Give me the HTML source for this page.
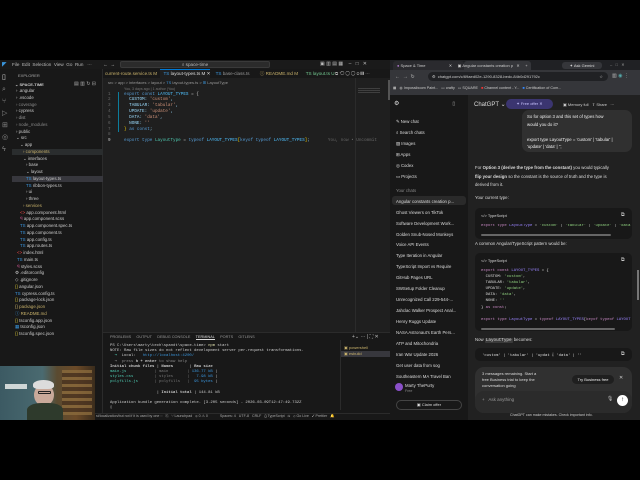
<!DOCTYPE html>
<html><head><meta charset="utf-8"><style>
*{margin:0;padding:0;box-sizing:border-box}
body{width:640px;height:480px;background:#000;position:relative;overflow:hidden;font-family:"Liberation Sans",sans-serif;font-size:4.6px;color:#ccc}
.a{position:absolute;white-space:nowrap}
.m{font-family:"Liberation Mono",monospace}
</style></head><body>
<!-- VS Code -->
<div class="a" style="left:0;top:60px;width:390px;height:360px;background:#1f1f1f"></div>
<div class="a" style="left:0;top:60px;width:390px;height:9px;background:#1a1a1a"></div>
<div class="a" style="left:2px;top:61px;color:#3a96dd;font-size:6px">◤</div>
<div class="a" style="left:12px;top:62px;color:#bbb">File&nbsp;&nbsp;Edit&nbsp;&nbsp;Selection&nbsp;&nbsp;View&nbsp;&nbsp;Go&nbsp;&nbsp;Run&nbsp;&nbsp;&nbsp;···&nbsp;&nbsp;&nbsp;&nbsp;&nbsp;&nbsp;&nbsp;&nbsp;&nbsp;←&nbsp;&nbsp;→</div>
<div class="a" style="left:120px;top:61px;width:150px;height:7px;background:#2b2b2b;border:1px solid #3a3a3a;border-radius:2px;color:#bbb;text-align:center;line-height:5px">⌕ space-time</div>
<div class="a" style="left:320px;top:61px;color:#bbb;font-size:5px">▣ ▥ ▤ ▦&nbsp;&nbsp;&nbsp;&nbsp;–&nbsp;&nbsp;&nbsp;□&nbsp;&nbsp;&nbsp;✕</div>
<!-- activity bar -->
<div class="a" style="left:0;top:69px;width:12px;height:344px;background:#181818"></div>
<div class="a" style="left:2px;top:72px;color:#ddd;font-size:7px;line-height:12px">▯<br><span style="color:#888">⌕<br>⑂<br>▷<br>⊞<br>◎<br>ϟ</span></div>
<!-- sidebar -->
<div class="a" style="left:12px;top:69px;width:91px;height:344px;background:#181818;border-right:1px solid #2b2b2b"></div>
<div class="a" style="left:18px;top:73px;color:#aaa;font-size:4px">EXPLORER</div>
<div class="a" style="left:15px;top:82px;color:#ccc;font-size:4px;font-weight:bold">⌄ SPACE-TIME</div>
<div class="a" style="left:74px;top:81px;color:#aaa;font-size:5px">▤ ▥ ↻ ⊟</div>
<div class="a" style="left:12px;top:149px;width:91px;height:6px;background:#2a2d2e"></div>
<div class="a" style="left:12px;top:176px;width:91px;height:6px;background:#37373d"></div>
<div class="a" style="left:0;top:88px;line-height:6.75px;color:#ccc;font-size:4.4px">
<div style="padding-left:16px">› .angular</div><div style="padding-left:16px">› .vscode</div><div style="padding-left:16px;color:#888">› coverage</div><div style="padding-left:16px">› cypress</div><div style="padding-left:16px;color:#999">› dist</div><div style="padding-left:16px;color:#888">› node_modules</div><div style="padding-left:16px">› public</div><div style="padding-left:16px">⌄ src</div><div style="padding-left:20px">⌄ app</div><div style="padding-left:23px;color:#c9b26b">› components</div><div style="padding-left:23px">⌄ interfaces</div><div style="padding-left:26px">› base</div><div style="padding-left:26px">⌄ layout</div><div style="padding-left:26px"><span style="color:#3a96dd">TS</span> layout-types.ts</div><div style="padding-left:26px"><span style="color:#3a96dd">TS</span> ribbon-types.ts</div><div style="padding-left:26px">› ui</div><div style="padding-left:26px">› three</div><div style="padding-left:23px;color:#c9b26b">› services</div><div style="padding-left:20px"><span style="color:#e44">&lt;&gt;</span> app.component.html</div><div style="padding-left:20px"><span style="color:#c6538c">ꟼ</span> app.component.scss</div><div style="padding-left:20px"><span style="color:#3a96dd">TS</span> app.component.spec.ts</div><div style="padding-left:20px"><span style="color:#3a96dd">TS</span> app.component.ts</div><div style="padding-left:20px"><span style="color:#3a96dd">TS</span> app.config.ts</div><div style="padding-left:20px"><span style="color:#3a96dd">TS</span> app.routes.ts</div><div style="padding-left:17px"><span style="color:#e44">&lt;&gt;</span> index.html</div><div style="padding-left:17px"><span style="color:#3a96dd">TS</span> main.ts</div><div style="padding-left:17px"><span style="color:#c6538c">ꟼ</span> styles.scss</div><div style="padding-left:15px">⚙ .editorconfig</div><div style="padding-left:15px">◇ .gitignore</div><div style="padding-left:15px"><span style="color:#cb3">{}</span> angular.json</div><div style="padding-left:15px"><span style="color:#3a96dd">TS</span> cypress.config.ts</div><div style="padding-left:15px"><span style="color:#cb3">{}</span> package-lock.json</div><div style="padding-left:15px;color:#c9b26b"><span>{}</span> package.json</div><div style="padding-left:15px;color:#c9b26b"><span style="color:#3a96dd">ⓘ</span> README.md</div><div style="padding-left:15px"><span style="color:#cb3">{}</span> tsconfig.app.json</div><div style="padding-left:15px"><span style="color:#3a96dd">▦</span> tsconfig.json</div><div style="padding-left:15px"><span style="color:#cb3">{}</span> tsconfig.spec.json</div>
</div>
<!-- tabs -->
<div class="a" style="left:103px;top:69px;width:287px;height:9px;background:#181818"></div>
<div class="a" style="left:160px;top:69px;width:50px;height:9px;background:#1f1f1f;border-top:1px solid #0078d4"></div>
<div class="a" style="left:105px;top:71px;color:#c9b26b">current-route.service.ts M&nbsp;&nbsp;&nbsp;&nbsp;&nbsp;<span style="color:#ddd"><span style="color:#3a96dd">TS</span> layout-types.ts M ✕</span>&nbsp;&nbsp;&nbsp;&nbsp;<span style="color:#999"><span style="color:#3a96dd">TS</span> base-class.ts</span>&nbsp;&nbsp;&nbsp;&nbsp;&nbsp;&nbsp;&nbsp;&nbsp;<span>ⓘ README.md M</span>&nbsp;&nbsp;&nbsp;&nbsp;&nbsp;&nbsp;<span style="color:#73c991">TS layout.ts U</span></div>
<div class="a" style="left:335px;top:71px;color:#aaa;font-size:4.5px">⧉ ⟲ ◯ ◯ ⊛ ▥ ···</div>
<div class="a" style="left:108px;top:80px;color:#999;font-size:4px">src &gt; app &gt; interfaces &gt; layout &gt; <span style="color:#3a96dd">TS</span> layout-types.ts &gt; <span style="color:#3a96dd">⊞</span> LayoutType</div>
<div class="a" style="left:124px;top:87px;color:#777;font-size:3.6px">You, 3 days ago | 1 author (You)</div>
<div class="a m" style="left:108px;top:91.5px;line-height:5.85px;font-size:4.3px;color:#666">1<br>2<br>3<br>4<br>5<br>6<br>7<br>8<br><span style="color:#ccc">9</span></div>
<div class="a" style="left:118px;top:92px;width:1px;height:40px;background:#0c7d9d"></div>
<div class="a m" style="left:124px;top:91.5px;line-height:5.85px;font-size:4.3px;color:#9cdcfe">
<div><span style="color:#569cd6">export const</span> <span style="color:#4fc1ff">LAYOUT_TYPES</span> <span style="color:#ccc">= {</span></div>
<div>&nbsp;&nbsp;CUSTOM: <span style="color:#ce9178">'custom'</span>,</div>
<div>&nbsp;&nbsp;TABULAR: <span style="color:#ce9178">'tabular'</span>,</div>
<div>&nbsp;&nbsp;UPDATE: <span style="color:#ce9178">'update'</span>,</div>
<div>&nbsp;&nbsp;DATA: <span style="color:#ce9178">'data'</span>,</div>
<div>&nbsp;&nbsp;NONE: <span style="color:#ce9178">''</span></div>
<div><span style="color:#ffd700">}</span> <span style="color:#569cd6">as const</span>;</div>
<div>&nbsp;</div>
<div><span style="color:#569cd6">export type</span> <span style="color:#4ec9b0">LayoutType</span> <span style="color:#ccc">=</span> <span style="color:#569cd6">typeof</span> <span style="color:#4fc1ff">LAYOUT_TYPES</span><span style="color:#ffd700">[</span><span style="color:#569cd6">keyof typeof</span> <span style="color:#4fc1ff">LAYOUT_TYPES</span><span style="color:#ffd700">]</span>;<span style="color:#666">&nbsp;&nbsp;&nbsp;&nbsp;&nbsp;&nbsp;&nbsp;You, now • Uncommit</span></div>
</div>
<div class="a" style="left:355px;top:78px;width:1px;height:254px;background:#2b2b2b"></div>
<div class="a" style="left:358px;top:88px;width:22px;height:5px;background:repeating-linear-gradient(#555 0 1px,transparent 1px 2px);opacity:.6"></div>
<div class="a" style="left:388px;top:80px;width:2px;height:20px;background:#555"></div>
<!-- panel -->
<div class="a" style="left:103px;top:332px;width:287px;height:81px;background:#181818;border-top:1px solid #2b2b2b"></div>
<div class="a" style="left:110px;top:335px;color:#999;font-size:3.8px">PROBLEMS&nbsp;&nbsp;&nbsp;&nbsp;&nbsp;OUTPUT&nbsp;&nbsp;&nbsp;&nbsp;&nbsp;DEBUG CONSOLE&nbsp;&nbsp;&nbsp;&nbsp;&nbsp;<span style="color:#ddd;border-bottom:1px solid #ddd">TERMINAL</span>&nbsp;&nbsp;&nbsp;&nbsp;&nbsp;PORTS&nbsp;&nbsp;&nbsp;&nbsp;&nbsp;GITLENS</div>
<div class="a" style="left:352px;top:334px;color:#bbb;font-size:5px">+⌄ ··· | ⛶ ✕</div>
<div class="a" style="left:340px;top:340px;width:1px;height:70px;background:#2b2b2b"></div>
<div class="a" style="left:341px;top:351px;width:49px;height:6px;background:#37373d"></div>
<div class="a" style="left:344px;top:345px;color:#c9b26b;line-height:6px;font-size:4px">▣ powershell<br>▣ esbuild</div>
<div class="a m" style="left:110px;top:344px;line-height:5.2px;font-size:3.9px;color:#ccc">
<div>PS C:\Users\marty\tech\spandt\space-time&gt; <span style="color:#dcdcaa">npm</span> start</div>
<div>NOTE: Raw file sizes do not reflect development server per-request transformations.</div>
<div>&nbsp;&nbsp;<span style="color:#4ec9b0">➜</span>&nbsp;&nbsp;Local:&nbsp;&nbsp;&nbsp;<span style="color:#3a96dd">http://localhost:4200/</span></div>
<div style="color:#888">&nbsp;&nbsp;➜&nbsp;&nbsp;press <b style="color:#ccc">h + enter</b> to show help</div>
<div><b>Initial chunk files</b> | <b>Names</b>&nbsp;&nbsp;&nbsp;&nbsp;&nbsp;&nbsp;&nbsp;| <b>Raw size</b></div>
<div><span style="color:#4ec9b0">main.js</span>&nbsp;&nbsp;&nbsp;&nbsp;&nbsp;&nbsp;&nbsp;&nbsp;&nbsp;&nbsp;&nbsp;&nbsp;<span style="color:#777">| main&nbsp;&nbsp;&nbsp;&nbsp;&nbsp;&nbsp;&nbsp;&nbsp;|</span> <span style="color:#3a96dd">136.77 kB</span> |</div>
<div><span style="color:#4ec9b0">styles.css</span>&nbsp;&nbsp;&nbsp;&nbsp;&nbsp;&nbsp;&nbsp;&nbsp;&nbsp;<span style="color:#777">| styles&nbsp;&nbsp;&nbsp;&nbsp;&nbsp;&nbsp;|</span>&nbsp;&nbsp;&nbsp;<span style="color:#3a96dd">7.98 kB</span> |</div>
<div><span style="color:#4ec9b0">polyfills.js</span>&nbsp;&nbsp;&nbsp;&nbsp;&nbsp;&nbsp;&nbsp;<span style="color:#777">| polyfills&nbsp;&nbsp;&nbsp;|</span>&nbsp;&nbsp;<span style="color:#3a96dd">95 bytes</span> |</div>
<div>&nbsp;</div>
<div>&nbsp;&nbsp;&nbsp;&nbsp;&nbsp;&nbsp;&nbsp;&nbsp;&nbsp;&nbsp;&nbsp;&nbsp;&nbsp;&nbsp;&nbsp;&nbsp;&nbsp;&nbsp;&nbsp;&nbsp;| <b>Initial total</b> | 144.81 kB</div>
<div>&nbsp;</div>
<div>Application bundle generation complete. [3.205 seconds] - 2026-03-09T12:47:49.732Z</div>
<div>▯</div>
</div>
<!-- status bar -->
<div class="a" style="left:0;top:413px;width:390px;height:7px;background:#181818;border-top:1px solid #2b2b2b"></div>
<div class="a" style="left:96px;top:414px;color:#aaa;font-size:3.6px">st/localization/but not if it is used by one ◌&nbsp;&nbsp;&nbsp;⎘&nbsp;&nbsp;&nbsp;⑂ Launchpad&nbsp;&nbsp;&nbsp;⊗ 0 ⚠ 0&nbsp;&nbsp;&nbsp;&nbsp;&nbsp;&nbsp;&nbsp;&nbsp;&nbsp;&nbsp;&nbsp;&nbsp;Spaces: 4&nbsp;&nbsp;&nbsp;UTF-8&nbsp;&nbsp;&nbsp;CRLF&nbsp;&nbsp;&nbsp;{} TypeScript&nbsp;&nbsp;&nbsp;⛁&nbsp;&nbsp;&nbsp;⊘ Go Live&nbsp;&nbsp;&nbsp;✓ Prettier&nbsp;&nbsp;&nbsp;🔔</div>
<!-- webcam -->
<div class="a" style="left:0;top:366px;width:95px;height:54px;background:linear-gradient(90deg,#3c5a63 0,#4a6a70 45%,#5a4a30 60%,#6b4a28 80%,#3a2c1c 100%)"></div>
<div class="a" style="left:5px;top:384px;width:22px;height:5px;background:#cfd6d6"></div>
<div class="a" style="left:62px;top:370px;width:30px;height:45px;background:repeating-linear-gradient(#8a6a3c 0 3px,#4a3320 3px 7px);opacity:.8"></div>
<div class="a" style="left:34px;top:384px;width:20px;height:22px;border-radius:50%;background:#c9a99a"></div>
<div class="a" style="left:33px;top:380px;width:21px;height:9px;border-radius:50% 50% 30% 30%;background:#dcdcdc"></div>
<div class="a" style="left:27px;top:403px;width:36px;height:17px;border-radius:40% 40% 0 0;background:#2e3a2c"></div>
<div class="a" style="left:38px;top:391px;width:13px;height:3px;border:1px solid #222;border-radius:1px"></div>

<!-- Browser -->
<div class="a" style="left:390px;top:60px;width:250px;height:10px;background:#202124"></div>
<div class="a" style="left:393px;top:61px;width:71px;height:9px;background:#2a2a2e;border-radius:3px 3px 0 0"></div>
<div class="a" style="left:464px;top:61px;width:67px;height:9px;background:#35363a;border-radius:3px 3px 0 0"></div>
<div class="a" style="left:397px;top:62.5px;color:#ccc;font-size:4px"><span style="color:#b07ad0">●</span> Space &amp; Time&nbsp;&nbsp;&nbsp;&nbsp;&nbsp;&nbsp;&nbsp;&nbsp;&nbsp;&nbsp;&nbsp;&nbsp;&nbsp;&nbsp;&nbsp;&nbsp;&nbsp;&nbsp;&nbsp;&nbsp;&nbsp;✕&nbsp;&nbsp;&nbsp;&nbsp;&nbsp;▣ Angular constants creation p&nbsp;&nbsp;&nbsp;✕&nbsp;&nbsp;&nbsp;&nbsp;&nbsp;+</div>
<div class="a" style="left:562px;top:62px;width:40px;height:7px;background:#35363a;border-radius:3px;color:#ddd;font-size:4px;text-align:center;line-height:7px">✦ Ask Gemini</div>
<div class="a" style="left:610px;top:62px;color:#999;font-size:4px">–&nbsp;&nbsp;&nbsp;□&nbsp;&nbsp;&nbsp;✕</div>
<div class="a" style="left:390px;top:70px;width:250px;height:25px;background:#35363a"></div>
<div class="a" style="left:395px;top:73.5px;color:#bbb;font-size:5px">←&nbsp;&nbsp;→&nbsp;&nbsp;↻</div>
<div class="a" style="left:428px;top:72px;width:180px;height:9px;background:#202124;border-radius:5px;color:#ccc;font-size:4px;line-height:9px;padding-left:4px">⚙&nbsp;&nbsp;chatgpt.com/c/69aed02e-1290-8328-bedc-84b0d291792c<span style="float:right;padding-right:5px">☆</span></div>
<div class="a" style="left:612px;top:73px;color:#bbb;font-size:5px">▥ <span style="color:#5aa">◉</span> ⋮</div>
<div class="a" style="left:393px;top:86px;color:#ccc;font-size:3.7px">▦&nbsp;&nbsp;&nbsp;◍ Impossiboom Paint...&nbsp;&nbsp;&nbsp;▭ crafty&nbsp;&nbsp;&nbsp;▭ SQUARE&nbsp;&nbsp;&nbsp;<span style="color:#e33">■</span> Channel content - Y...&nbsp;&nbsp;&nbsp;<span style="color:#38f">■</span> Certification of Com...</div>
<!-- chatgpt sidebar -->
<div class="a" style="left:390px;top:95px;width:78px;height:325px;background:#181818"></div>
<div class="a" style="left:394px;top:100px;color:#ddd;font-size:6px">⚙<span style="margin-left:53px;font-size:5px;color:#aaa">▯</span></div>
<div class="a" style="left:392px;top:196px;width:74px;height:9px;background:#2a2a2a;border-radius:3px"></div>
<div class="a" style="left:396px;top:117px;line-height:10.95px;color:#ddd;font-size:4.3px">
<div>✎ New chat</div><div>⌕ Search chats</div><div>▨ Images</div><div>⊞ Apps</div><div>◎ Codex</div><div>▭ Projects</div>
<div style="color:#888;margin-top:3px">Your chats</div>
<div>Angular constants creation p...</div><div>Ghost Viewers on TikTok</div><div>Software Development Work...</div><div>Golden Snub-Nosed Monkeys</div><div>Voice API Events</div><div>Type Iteration in Angular</div><div>TypeScript Import vs Require</div><div>GitHub Pages URL</div><div>SWSetup Folder Cleanup</div><div>Unrecognized Call 229-544-...</div><div>Jahclac Walker Prospect Anal...</div><div>Henry Ruggs Update</div><div>NASA Astronaut's Earth Pers...</div><div>ATP and Mitochondria</div><div>Iran War Update 2026</div><div>Get user data from sog</div><div>Southeastern MA Travel Ban</div>
</div>
<div class="a" style="left:395px;top:383px;width:8px;height:8px;border-radius:50%;background:#8a4fc8"></div>
<div class="a" style="left:405px;top:383px;color:#ddd;font-size:4.3px;line-height:5px">Marty ThePurty<br><span style="color:#888;font-size:3.6px">Free</span></div>
<div class="a" style="left:396px;top:400px;width:66px;height:10px;border:1px solid #444;border-radius:5px;color:#ddd;font-size:4px;text-align:center;line-height:8px">▣ Claim offer</div>
<!-- main -->
<div class="a" style="left:468px;top:95px;width:172px;height:325px;background:#212121"></div>
<div class="a" style="left:474px;top:101px;color:#ddd;font-size:6px">ChatGPT ⌄</div>
<div class="a" style="left:506px;top:99px;width:47px;height:10px;background:#3b3570;border-radius:5px;color:#c9c4ff;font-size:4px;text-align:center;line-height:10px">✦ Free offer ✕</div>
<div class="a" style="left:563px;top:102px;color:#ccc;font-size:4px">▣ Memory full&nbsp;&nbsp;&nbsp;⇪ Share&nbsp;&nbsp;&nbsp;···</div>
<div class="a" style="left:522px;top:110px;width:110px;height:42px;background:#303030;border-radius:7px"></div>
<div class="a" style="left:527px;top:113px;color:#eee;font-size:4.3px;line-height:7.5px">So for option 3 and this set of types how<br>would you do it?<br><br>export type LayoutType = 'custom' | 'tabular' |<br>'update' | 'data' | '';</div>
<div class="a" style="left:475px;top:164px;color:#ddd;font-size:4.3px;line-height:8.5px">For <b>Option 3 (derive the type from the constant)</b> you would typically<br><b>flip your design</b> so the constant is the source of truth and the type is<br>derived from it.</div>
<div class="a" style="left:475px;top:195px;color:#ddd;font-size:4.3px">Your current type:</div>
<div class="a" style="left:475px;top:208px;width:157px;height:31px;background:#181818;border-radius:5px"></div>
<div class="a" style="left:481px;top:213px;color:#ddd;font-size:4px">&lt;/&gt; TypeScript</div>
<div class="a" style="left:621px;top:212px;color:#ccc;font-size:5px">⧉</div>
<div class="a m" style="left:481px;top:224px;font-size:3.9px;color:#ccc;overflow:hidden;width:150px"><span style="color:#c586c0">export type</span> <span style="color:#9a84ff">LayoutType</span> = <span style="color:#8fd17f">'custom'</span> | <span style="color:#8fd17f">'tabular'</span> | <span style="color:#8fd17f">'update'</span> | <span style="color:#8fd17f">'data'</span></div>
<div class="a" style="left:481px;top:234px;width:130px;height:2px;background:#666;border-radius:1px"></div>
<div class="a" style="left:475px;top:241px;color:#ddd;font-size:4.3px">A common Angular/TypeScript pattern would be:</div>
<div class="a" style="left:475px;top:253px;width:157px;height:78px;background:#181818;border-radius:5px"></div>
<div class="a" style="left:481px;top:258px;color:#ddd;font-size:4px">&lt;/&gt; TypeScript</div>
<div class="a" style="left:621px;top:257px;color:#ccc;font-size:5px">⧉</div>
<div class="a m" style="left:481px;top:268px;font-size:3.9px;line-height:6.1px;color:#ddd;overflow:hidden;width:150px">
<div><span style="color:#c586c0">export const</span> <span style="color:#9a84ff">LAYOUT_TYPES</span> = {</div>
<div>&nbsp;&nbsp;CUSTOM: <span style="color:#8fd17f">'custom'</span>,</div>
<div>&nbsp;&nbsp;TABULAR: <span style="color:#8fd17f">'tabular'</span>,</div>
<div>&nbsp;&nbsp;UPDATE: <span style="color:#8fd17f">'update'</span>,</div>
<div>&nbsp;&nbsp;DATA: <span style="color:#8fd17f">'data'</span>,</div>
<div>&nbsp;&nbsp;NONE: <span style="color:#8fd17f">''</span></div>
<div>} <span style="color:#c586c0">as const</span>;</div>
<div>&nbsp;</div>
<div><span style="color:#c586c0">export type</span> <span style="color:#9a84ff">LayoutType</span> = <span style="color:#c586c0">typeof</span> <span style="color:#9a84ff">LAYOUT_TYPES</span>[<span style="color:#c586c0">keyof typeof</span> <span style="color:#9a84ff">LAYOUT</span></div>
</div>
<div class="a" style="left:481px;top:328px;width:134px;height:2px;background:#666;border-radius:1px"></div>
<div class="a" style="left:475px;top:337px;color:#ddd;font-size:4.3px">Now <span style="background:#3a3a3a;padding:0 1px;border-radius:1px" class="m">LayoutType</span> becomes:</div>
<div class="a" style="left:475px;top:348px;width:157px;height:13px;background:#181818;border-radius:5px"></div>
<div class="a m" style="left:482px;top:352px;font-size:3.9px;color:#ddd">'custom' | 'tabular' | 'updat <span style="font-family:'Liberation Sans';background:#333;border-radius:50%">↓</span> 'data' | ''</div>
<div class="a" style="left:621px;top:351px;color:#ccc;font-size:5px">⧉</div>
<div class="a" style="left:475px;top:367px;width:157px;height:46px;background:#303030;border-radius:9px"></div>
<div class="a" style="left:482px;top:371px;color:#ddd;font-size:4px;line-height:6px">3 messages remaining. Start a<br>free Business trial to keep the<br>conversation going</div>
<div class="a" style="left:572px;top:375px;width:42px;height:9px;background:#1f1f1f;border-radius:5px;color:#eee;font-size:4px;text-align:center;line-height:9px">Try Business free</div>
<div class="a" style="left:619px;top:375px;color:#ccc;font-size:5px">✕</div>
<div class="a" style="left:475px;top:391px;width:157px;height:22px;background:#2b2b2b;border-radius:9px"></div>
<div class="a" style="left:482px;top:397px;color:#999;font-size:4.5px">+&nbsp;&nbsp;&nbsp;Ask anything</div>
<div class="a" style="left:607px;top:396px;color:#ccc;font-size:5px">🎙</div>
<div class="a" style="left:617px;top:395px;width:11px;height:11px;border-radius:50%;background:#fff;color:#000;font-size:6px;text-align:center;line-height:11px">↑</div>
<div class="a" style="left:510px;top:413px;color:#ccc;font-size:3.6px">ChatGPT can make mistakes. Check important info.</div>
<div class="a" style="left:637px;top:270px;width:2px;height:30px;background:#777"></div>
</body></html>
